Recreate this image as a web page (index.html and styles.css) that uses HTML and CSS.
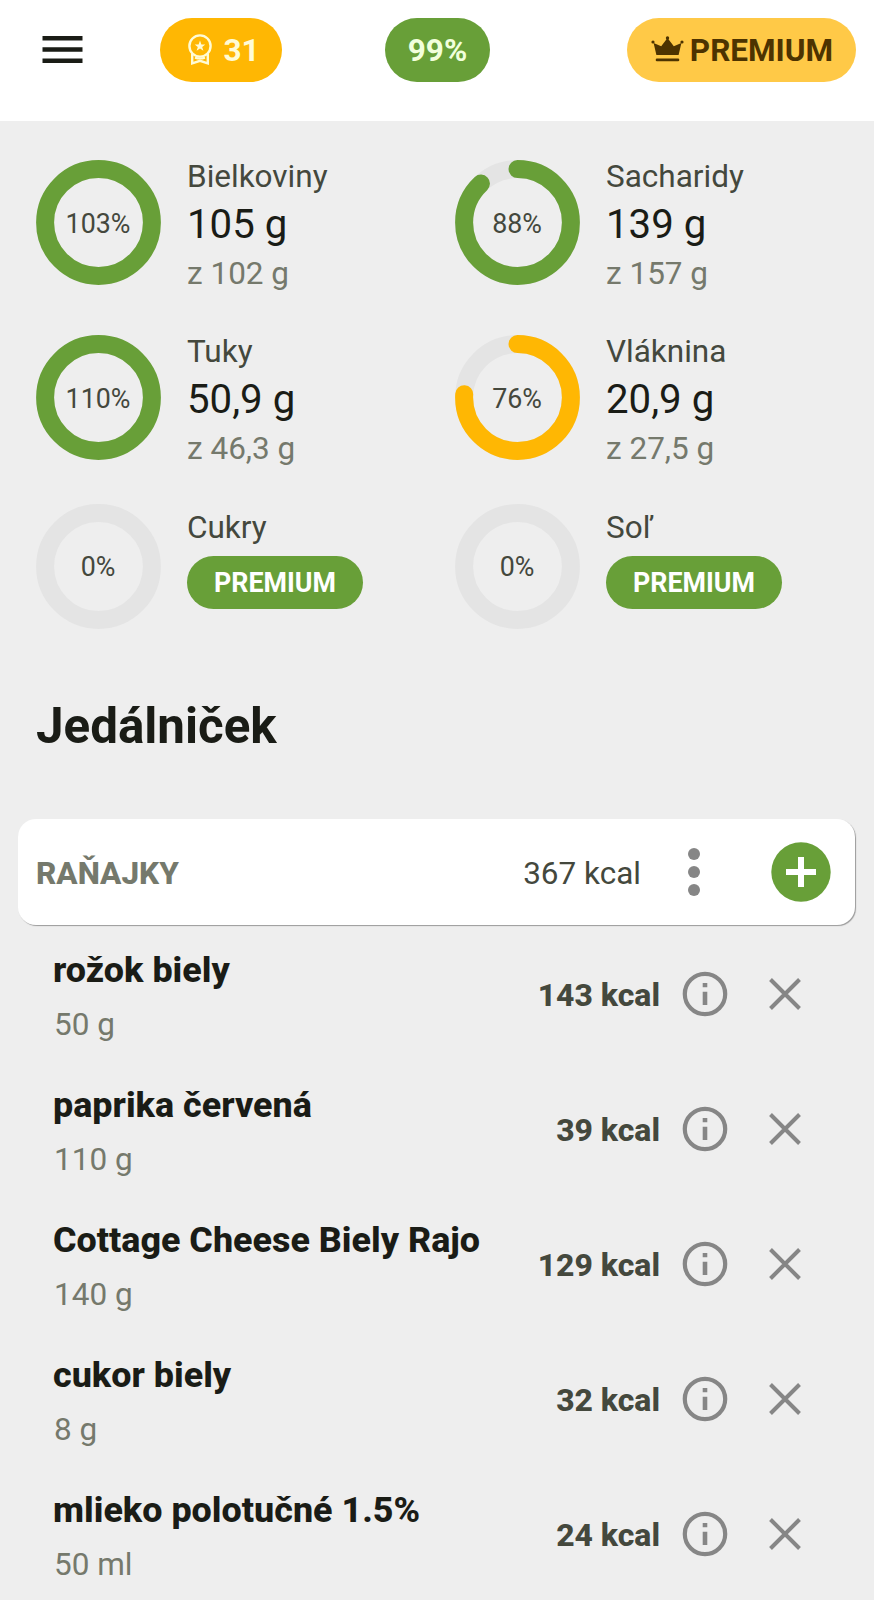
FILE: index.html
```html
<!DOCTYPE html>
<html lang="sk">
<head>
    <meta charset="UTF-8">
    <meta name="viewport" content="width=device-width, initial-scale=1.0">
    <title>Jedálniček</title>
    <link rel="stylesheet" href="styles.css">
</head>
<body>

<header class="topbar">
    <svg class="menu-icon" viewBox="0 0 40 28"><path d="M0 2.2h40M0 13.5h40M0 24.8h40" stroke="#1a1c16" stroke-width="4.4"/></svg>
    <div class="pill pill-badge">
        <svg class="badge-icon" viewBox="0 0 24 32">
            <g fill="none" stroke="#fffbd5" stroke-width="2.4">
                <circle cx="12" cy="12" r="10.6"/>
                <path d="M4.2 19.5v9.8l7.8-2.5 7.8 2.5v-9.8"/>
                <path d="M7 23.8q5 1.6 10 0" stroke-width="2"/>
            </g>
            <path d="M12 6.6l1.4 3.9h3.9l-3.1 2.4 1.2 3.9-3.4-2.3-3.4 2.3 1.2-3.9-3.1-2.4h3.9z" fill="#fffbd5"/>
        </svg>
        <span>31</span>
    </div>
    <div class="pill pill-score">99%</div>
    <div class="pill pill-premium">
        <svg class="crown-icon" viewBox="0 0 33 26">
            <path d="M5.4 19L2.6 7l7.6 3.2L16.5 2l6.3 8.2L30.4 7l-2.8 12z" fill="#4d3300"/>
            <circle cx="16.5" cy="2" r="1.7" fill="#4d3300"/>
            <circle cx="2" cy="6" r="1.6" fill="#4d3300"/>
            <circle cx="31" cy="6" r="1.6" fill="#4d3300"/>
            <path d="M6 23.9h21" stroke="#4d3300" stroke-width="2.6" stroke-linecap="round"/>
        </svg>
        <span>PREMIUM</span>
    </div>
</header>

<section class="nutrients">
    <div class="nutrient">
        <div class="ring">
            <svg viewBox="0 0 125 125"><circle class="ring-full" cx="62.5" cy="62.5" r="53.4"/></svg>
            <span>103%</span>
        </div>
        <div class="nutrient-text">
            <div class="label">Bielkoviny</div>
            <div class="value">105 g</div>
            <div class="goal">z 102 g</div>
        </div>
    </div>
    <div class="nutrient">
        <div class="ring">
            <svg viewBox="0 0 125 125">
                <circle class="ring-track" cx="62.5" cy="62.5" r="53.4"/>
                <circle class="ring-bar" cx="62.5" cy="62.5" r="53.4" pathLength="100" stroke-dasharray="88 100"/>
            </svg>
            <span>88%</span>
        </div>
        <div class="nutrient-text">
            <div class="label">Sacharidy</div>
            <div class="value">139 g</div>
            <div class="goal">z 157 g</div>
        </div>
    </div>
    <div class="nutrient">
        <div class="ring">
            <svg viewBox="0 0 125 125"><circle class="ring-full" cx="62.5" cy="62.5" r="53.4"/></svg>
            <span>110%</span>
        </div>
        <div class="nutrient-text">
            <div class="label">Tuky</div>
            <div class="value">50,9 g</div>
            <div class="goal">z 46,3 g</div>
        </div>
    </div>
    <div class="nutrient">
        <div class="ring">
            <svg viewBox="0 0 125 125">
                <circle class="ring-track" cx="62.5" cy="62.5" r="53.4"/>
                <circle class="ring-bar ring-low" cx="62.5" cy="62.5" r="53.4" pathLength="100" stroke-dasharray="76 100"/>
            </svg>
            <span>76%</span>
        </div>
        <div class="nutrient-text">
            <div class="label">Vláknina</div>
            <div class="value">20,9 g</div>
            <div class="goal">z 27,5 g</div>
        </div>
    </div>
    <div class="nutrient locked">
        <div class="ring">
            <svg viewBox="0 0 125 125"><circle class="ring-track" cx="62.5" cy="62.5" r="53.4"/></svg>
            <span>0%</span>
        </div>
        <div class="nutrient-text">
            <div class="label">Cukry</div>
            <div class="unlock">PREMIUM</div>
        </div>
    </div>
    <div class="nutrient locked">
        <div class="ring">
            <svg viewBox="0 0 125 125"><circle class="ring-track" cx="62.5" cy="62.5" r="53.4"/></svg>
            <span>0%</span>
        </div>
        <div class="nutrient-text">
            <div class="label">Soľ</div>
            <div class="unlock">PREMIUM</div>
        </div>
    </div>
</section>

<h1 class="title">Jedálniček</h1>

<div class="meal">
    <div class="meal-name">RAŇAJKY</div>
    <div class="meal-kcal">367 kcal</div>
    <svg class="dots-icon" viewBox="0 0 12 48"><g fill="#868686"><circle cx="6" cy="6" r="6"/><circle cx="6" cy="24" r="6"/><circle cx="6" cy="42" r="6"/></g></svg>
    <svg class="add-icon" viewBox="0 0 60 60"><circle cx="30" cy="30" r="29.7" fill="#689f38"/><path d="M15 30h30M30 15v30" stroke="#fff" stroke-width="6"/></svg>
</div>

<ul class="foods">
    <li class="food">
        <div class="food-text">
            <div class="food-name">rožok biely</div>
            <div class="food-amount">50 g</div>
        </div>
        <div class="food-kcal">143 kcal</div>
        <svg class="info-icon" viewBox="0 0 46 46"><use href="#info"/></svg>
        <svg class="close-icon" viewBox="0 0 32 32"><use href="#close"/></svg>
    </li>
    <li class="food">
        <div class="food-text">
            <div class="food-name">paprika červená</div>
            <div class="food-amount">110 g</div>
        </div>
        <div class="food-kcal">39 kcal</div>
        <svg class="info-icon" viewBox="0 0 46 46"><use href="#info"/></svg>
        <svg class="close-icon" viewBox="0 0 32 32"><use href="#close"/></svg>
    </li>
    <li class="food">
        <div class="food-text">
            <div class="food-name">Cottage Cheese Biely Rajo</div>
            <div class="food-amount">140 g</div>
        </div>
        <div class="food-kcal">129 kcal</div>
        <svg class="info-icon" viewBox="0 0 46 46"><use href="#info"/></svg>
        <svg class="close-icon" viewBox="0 0 32 32"><use href="#close"/></svg>
    </li>
    <li class="food">
        <div class="food-text">
            <div class="food-name">cukor biely</div>
            <div class="food-amount">8 g</div>
        </div>
        <div class="food-kcal">32 kcal</div>
        <svg class="info-icon" viewBox="0 0 46 46"><use href="#info"/></svg>
        <svg class="close-icon" viewBox="0 0 32 32"><use href="#close"/></svg>
    </li>
    <li class="food">
        <div class="food-text">
            <div class="food-name">mlieko polotučné 1.5%</div>
            <div class="food-amount">50 ml</div>
        </div>
        <div class="food-kcal">24 kcal</div>
        <svg class="info-icon" viewBox="0 0 46 46"><use href="#info"/></svg>
        <svg class="close-icon" viewBox="0 0 32 32"><use href="#close"/></svg>
    </li>
</ul>

<svg width="0" height="0" class="defs">
    <defs>
        <g id="info">
            <circle cx="23" cy="23" r="20.2" fill="none" stroke="#868686" stroke-width="4.2"/>
            <path d="M23 12v4.3M23 20.7v13.3" stroke="#868686" stroke-width="4.6"/>
        </g>
        <g id="close">
            <path d="M1.5 1.5l29 29M30.5 1.5l-29 29" stroke="#868686" stroke-width="4"/>
        </g>
    </defs>
</svg>

</body>
</html>
```
FILE: styles.css
```css
* {
    box-sizing: border-box;
}
body {
    margin: 0;
    height: 1600px;
    overflow: hidden;
    font-family: Roboto, sans-serif;
    font-size: 31.5px;
    background-color: #eeeeee;
    color: #1a1c16;
}
svg {
    display: block;
    flex: none;
}

/* top bar */
.topbar {
    display: flex;
    height: 121px;
    padding: 18px 18px 0 42px;
    background-color: #fff;
}
.menu-icon {
    width: 41px;
    height: 28px;
    margin: 18px 77px 0 0;
}
.pill {
    display: flex;
    align-items: center;
    justify-content: center;
    height: 64px;
    border-radius: 32px;
    font-weight: 700;
}
.pill-badge {
    width: 122px;
    padding-left: 6px;
    gap: 11px;
    background-color: #ffb703;
    color: #fffbd5;
}
.badge-icon {
    width: 24px;
    height: 32px;
    margin-top: -1px;
}
.pill-score {
    width: 105px;
    margin-left: 103px;
    background-color: #689f38;
    color: #f1ffdc;
}
.pill-premium {
    width: 229px;
    margin-left: auto;
    padding-left: 1px;
    gap: 6px;
    background-color: #ffc947;
    color: #4d3300;
}
.crown-icon {
    width: 33px;
    height: 26px;
    margin-top: -2px;
}

/* nutrients */
.nutrients {
    display: grid;
    grid-template-columns: 419px 419px;
    grid-auto-rows: 175.4px;
    padding: 33px 0 0 35.5px;
    height: 575px;
}
.nutrient {
    display: flex;
    gap: 26.5px;
}
.ring {
    display: grid;
    place-items: center;
    width: 125px;
    height: 125px;
    margin-top: 6px;
    font-size: 26.8px;
    color: #44483d;
}
.ring > * {
    grid-area: 1 / 1;
}
.ring span {
    padding-top: 2px;
}
.ring circle {
    fill: none;
    stroke-width: 18;
}
.ring-full {
    stroke: #689f38;
}
.ring-track {
    stroke: #e4e4e4;
}
.ring-bar {
    stroke: #689f38;
    stroke-linecap: round;
    transform: rotate(-90deg);
    transform-origin: center;
}
.ring-low {
    stroke: #ffb703;
}
.label {
    height: 45px;
    line-height: 45px;
    color: #44483d;
}
.value {
    font-size: 40.2px;
    line-height: 52px;
}
.goal {
    line-height: 45px;
    color: #75796c;
}
.locked .ring {
    margin-top: -1px;
}
.unlock {
    width: 176px;
    height: 53px;
    margin-top: 6px;
    border-radius: 27px;
    background-color: #689f38;
    color: #fff;
    font-size: 26.8px;
    font-weight: 700;
    line-height: 55px;
    text-align: center;
}

.title {
    margin: 0 0 62px 36px;
    font-size: 49.3px;
    font-weight: 700;
    line-height: 61px;
}

/* meal card */
.meal {
    display: flex;
    align-items: center;
    height: 106px;
    margin: 0 19px 0 18px;
    padding: 0 24px 0 18px;
    border-radius: 18px;
    background-color: #fff;
    box-shadow: 1px 1px 1px #9a9a9a;
}
.meal-name {
    flex: 1;
    padding-top: 2px;
    font-weight: 800;
    color: #75796c;
}
.meal-kcal {
    padding-top: 2px;
    color: #44483d;
}
.dots-icon {
    width: 12px;
    height: 48px;
    margin: 0 71px 0 47px;
}
.add-icon {
    width: 60px;
    height: 60px;
}

/* foods */
.foods {
    margin: 0;
    padding: 1px 73px 0 53px;
    list-style: none;
}
.food {
    display: flex;
    align-items: center;
    height: 135px;
}
.food-text {
    flex: 1;
    padding-top: 2px;
}
.food-name {
    font-size: 35.9px;
    font-weight: 800;
    line-height: 54px;
}
.food-amount {
    margin-top: 5px;
    padding-left: 1px;
    line-height: 45px;
    color: #75796c;
}
.food-kcal {
    padding-top: 3px;
    font-size: 31.9px;
    font-weight: 800;
    color: #44483d;
}
.info-icon {
    width: 46px;
    height: 46px;
    margin: 0 41px 0 22px;
}
.close-icon {
    width: 32px;
    height: 32px;
}
.defs {
    display: none;
}
```
